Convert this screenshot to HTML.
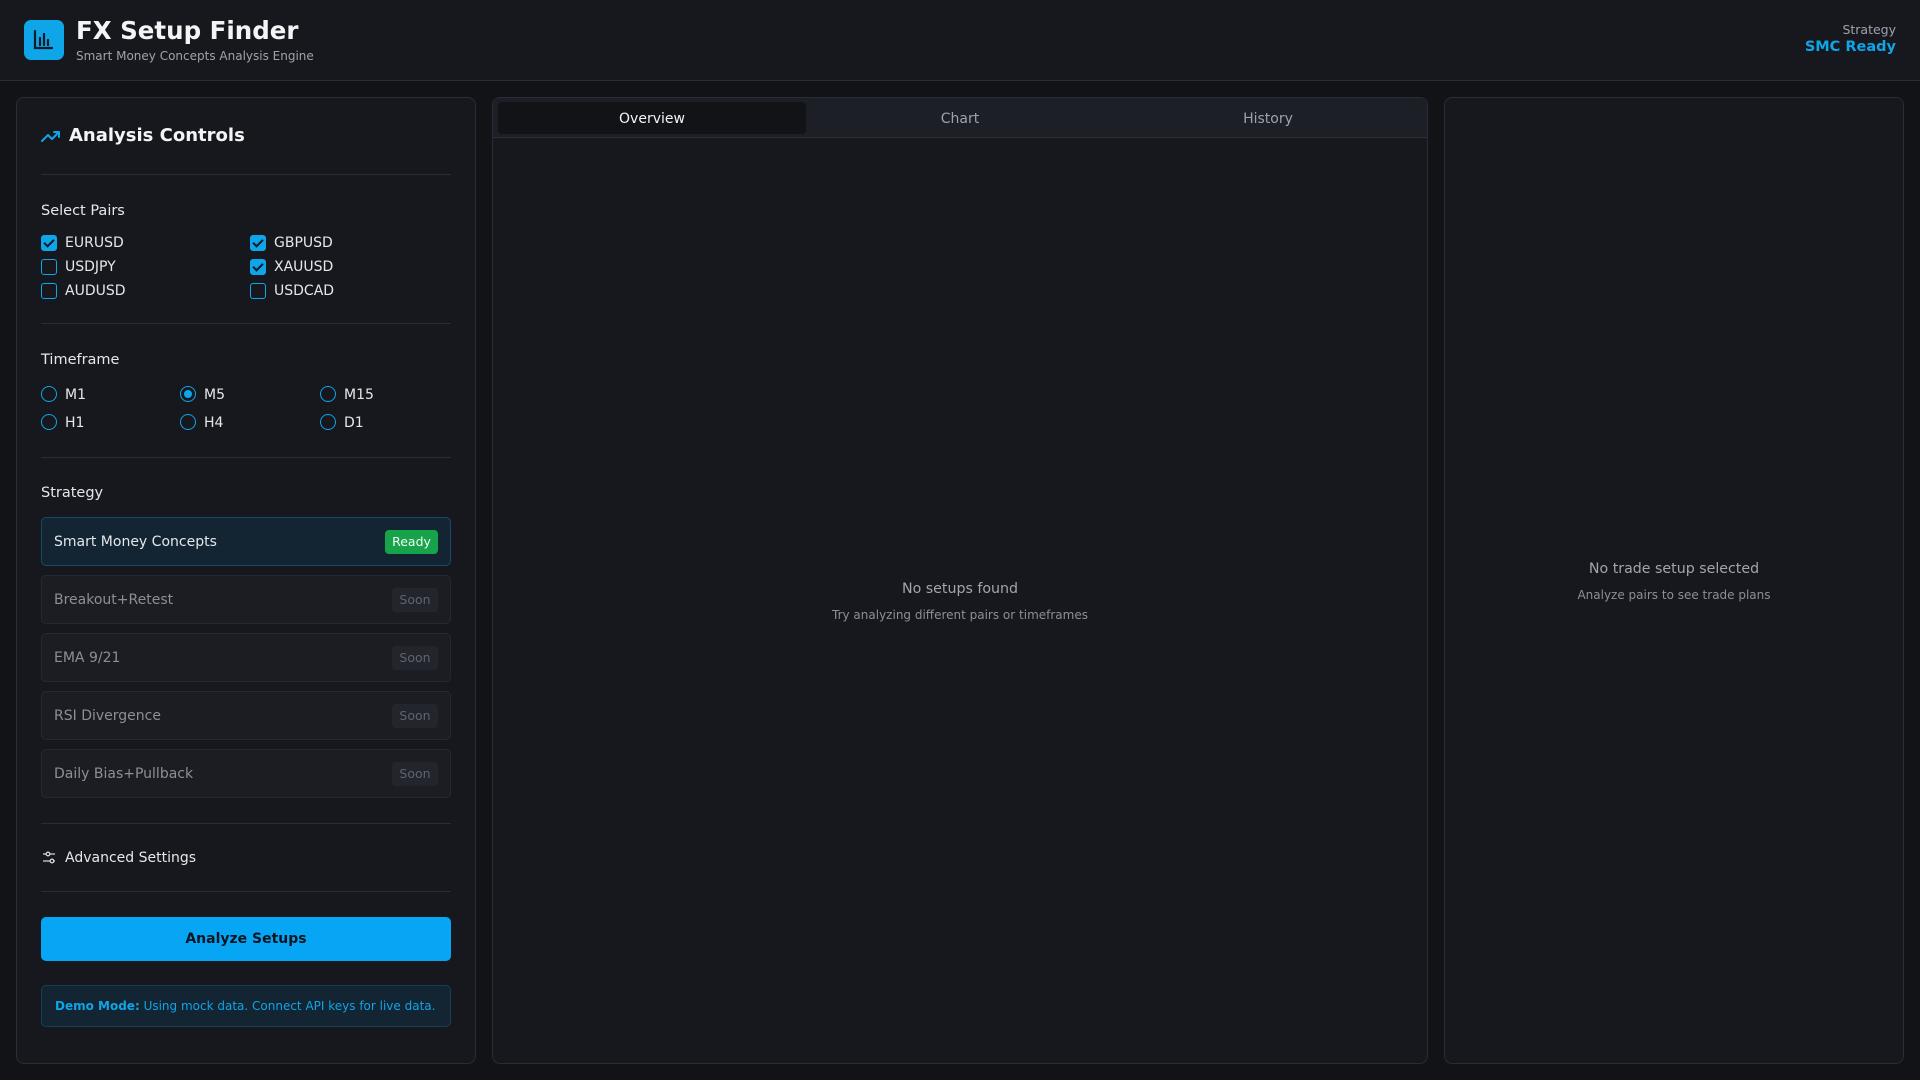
<!DOCTYPE html>
<html><head><meta charset="utf-8"><style>
*{box-sizing:border-box;margin:0;padding:0}
body{width:1920px;height:1080px;background:#121317;font-family:"DejaVu Sans","Liberation Sans",sans-serif;color:#e5e7eb;position:relative;overflow:hidden}
.a{position:absolute}
.hdr{left:0;top:0;width:1920px;height:81px;background:#17181d;border-bottom:1px solid #2a2d36}
.panel{background:#17181d;border:1px solid #2a2d36;border-radius:8px}
.div{position:absolute;left:41px;width:410px;height:1px;background:#2a2d35}
.lbl{font-size:14.5px;color:#e5e7eb}
.cb{position:absolute;width:16px;height:16px;border:1.5px solid #0ea5e9;border-radius:3px}
.cb.on{background:#0ea5e9}
.cb.on:after{content:"";position:absolute;left:4px;top:1px;width:4px;height:8px;border:solid #0b1b26;border-width:0 2px 2px 0;transform:rotate(45deg)}
.rd{position:absolute;width:16px;height:16px;border:1.5px solid #0ea5e9;border-radius:50%}
.rd.on:after{content:"";position:absolute;left:2.5px;top:2.5px;width:8px;height:8px;background:#0ea5e9;border-radius:50%}
.t{position:absolute;font-size:14px;color:#e5e7eb;line-height:18px}
.card{position:absolute;left:41px;width:410px;height:49px;border:1px solid #262932;border-radius:5px;background:#1b1d22}
.card span{position:absolute;left:12px;top:16px;font-size:14px;color:#8b8f98}
.card b{position:absolute;right:12px;top:12px;height:24px;width:46px;background:#22252c;border-radius:4px;font-weight:normal;font-size:12.5px;color:#5f636c;text-align:center;line-height:24px}
</style></head><body>
<div class="a hdr"></div>
<div class="a" style="left:24px;top:20px;width:40px;height:40px;background:#0ea5e9;border-radius:7px">
<svg width="40" height="40" viewBox="0 0 40 40"><g stroke="#0b1b26" stroke-width="2.2" fill="none" stroke-linecap="round"><path d="M11 11v17h17"/><path d="M16 18v7M20 14v11M24 20v5"/></g></svg></div>
<div class="a" style="left:76px;top:16px;font-size:24.5px;font-weight:bold;color:#f3f4f6">FX Setup Finder</div>
<div class="a" style="left:76px;top:49px;font-size:12px;color:#9ca3af">Smart Money Concepts Analysis Engine</div>
<div class="a" style="right:24px;top:22px;font-size:12.5px;color:#9ca3af;text-align:right">Strategy</div>
<div class="a" style="right:24px;top:39px;font-size:14.5px;font-weight:bold;color:#0ea5e9">SMC Ready</div>

<div class="a panel" style="left:16px;top:97px;width:460px;height:967px"></div>
<div class="a panel" style="left:492px;top:97px;width:936px;height:967px"></div>
<div class="a panel" style="left:1444px;top:97px;width:460px;height:967px"></div>

<svg class="a" style="left:41px;top:128px" width="20" height="16" viewBox="0 0 20 16"><path d="M1 13l6-6 4 4 7-7M13 4h5v5" stroke="#0ea5e9" stroke-width="2" fill="none" stroke-linecap="round" stroke-linejoin="round"/></svg>
<div class="a" style="left:69px;top:125px;font-size:18px;font-weight:bold;color:#f3f4f6">Analysis Controls</div>
<div class="div" style="top:174px"></div>
<div class="a lbl" style="left:41px;top:203px">Select Pairs</div>
<div class="cb on" style="left:41px;top:235px"></div><div class="t" style="left:65px;top:234px">EURUSD</div>
<div class="cb on" style="left:250px;top:235px"></div><div class="t" style="left:274px;top:234px">GBPUSD</div>
<div class="cb" style="left:41px;top:259px"></div><div class="t" style="left:65px;top:258px">USDJPY</div>
<div class="cb on" style="left:250px;top:259px"></div><div class="t" style="left:274px;top:258px">XAUUSD</div>
<div class="cb" style="left:41px;top:283px"></div><div class="t" style="left:65px;top:282px">AUDUSD</div>
<div class="cb" style="left:250px;top:283px"></div><div class="t" style="left:274px;top:282px">USDCAD</div>
<div class="div" style="top:323px"></div>
<div class="a lbl" style="left:41px;top:352px">Timeframe</div>
<div class="rd" style="left:41px;top:386px"></div><div class="t" style="left:65px;top:386px">M1</div>
<div class="rd on" style="left:180px;top:386px"></div><div class="t" style="left:204px;top:386px">M5</div>
<div class="rd" style="left:320px;top:386px"></div><div class="t" style="left:344px;top:386px">M15</div>
<div class="rd" style="left:41px;top:414px"></div><div class="t" style="left:65px;top:414px">H1</div>
<div class="rd" style="left:180px;top:414px"></div><div class="t" style="left:204px;top:414px">H4</div>
<div class="rd" style="left:320px;top:414px"></div><div class="t" style="left:344px;top:414px">D1</div>
<div class="div" style="top:457px"></div>
<div class="a lbl" style="left:41px;top:485px">Strategy</div>
<div class="card" style="top:517px;background:#132433;border-color:#154a69"><span style="color:#e5e7eb">Smart Money Concepts</span><b style="background:#16a34a;color:#f0fdf4;width:53px">Ready</b></div>
<div class="card" style="top:575px"><span>Breakout+Retest</span><b>Soon</b></div>
<div class="card" style="top:633px"><span>EMA 9/21</span><b>Soon</b></div>
<div class="card" style="top:691px"><span>RSI Divergence</span><b>Soon</b></div>
<div class="card" style="top:749px"><span>Daily Bias+Pullback</span><b>Soon</b></div>
<div class="div" style="top:823px"></div>
<svg class="a" style="left:42px;top:851px" width="14" height="14" viewBox="0 0 14 14"><g stroke="#d1d5db" stroke-width="1.3" fill="none"><path d="M1 3h3M8 3h5M1 10h7M12 10h1"/><circle cx="6" cy="3" r="1.8"/><circle cx="10" cy="10" r="1.8"/></g></svg>
<div class="a" style="left:65px;top:850px;font-size:14px;color:#e5e7eb">Advanced Settings</div>
<div class="div" style="top:891px"></div>
<div class="a" style="left:41px;top:917px;width:410px;height:44px;background:#06a6f5;border-radius:5px;text-align:center;line-height:44px;font-size:14px;font-weight:bold;color:#0b1520">Analyze Setups</div>
<div class="a" style="left:41px;top:985px;width:410px;height:42px;background:#132433;border:1px solid #163f58;border-radius:5px;font-size:12px;line-height:40px;padding-left:13px;color:#0ea5e9;white-space:nowrap"><b>Demo Mode:</b> Using mock data. Connect API keys for live data.</div>

<div class="a" style="left:493px;top:98px;width:934px;height:40px;background:#1c1f25;border-bottom:1px solid #2d3039;border-radius:8px 8px 0 0"></div>
<div class="a" style="left:498px;top:102px;width:308px;height:32px;background:#121317;border-radius:4px;text-align:center;line-height:34px;font-size:14px;color:#f3f4f6">Overview</div>
<div class="a" style="left:806px;top:102px;width:308px;height:32px;text-align:center;line-height:34px;font-size:14px;color:#9ca3af">Chart</div>
<div class="a" style="left:1114px;top:102px;width:308px;height:32px;text-align:center;line-height:34px;font-size:14px;color:#9ca3af">History</div>
<div class="a" style="left:492px;top:581px;width:936px;text-align:center;font-size:14.2px;color:#a1a5ad">No setups found</div>
<div class="a" style="left:492px;top:608px;width:936px;text-align:center;font-size:12px;color:#8b8f98">Try analyzing different pairs or timeframes</div>
<div class="a" style="left:1444px;top:561px;width:460px;text-align:center;font-size:14.2px;color:#a1a5ad">No trade setup selected</div>
<div class="a" style="left:1444px;top:588px;width:460px;text-align:center;font-size:12px;color:#8b8f98">Analyze pairs to see trade plans</div>
</body></html>
